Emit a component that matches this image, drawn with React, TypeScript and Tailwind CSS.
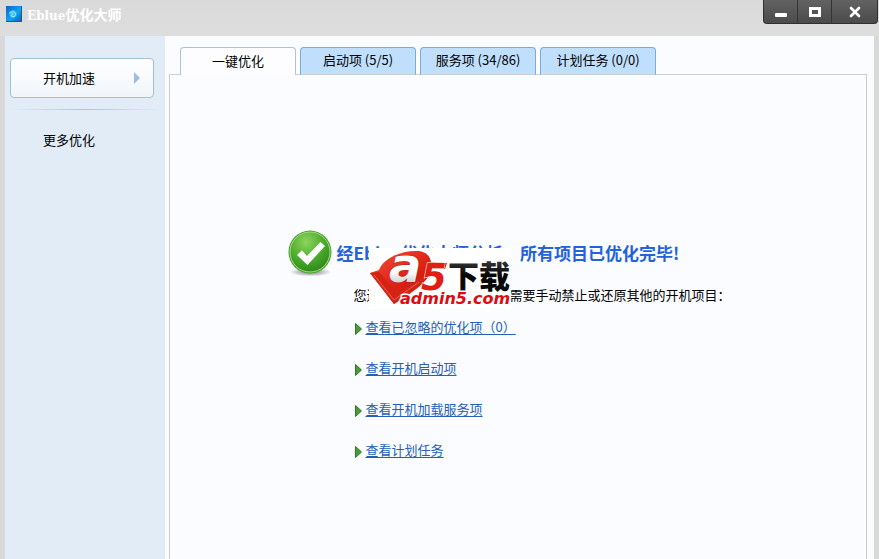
import { useState } from 'react';

const tabs = ['一键优化', '启动项 (5/5)', '服务项 (34/86)', '计划任务 (0/0)'];

const links = [
  '查看已忽略的优化项（0）',
  '查看开机启动项',
  '查看开机加载服务项',
  '查看计划任务',
];

export default function App() {
  const [tab, setTab] = useState(0);

  return (
    <div className="flex min-h-screen flex-col bg-[#dad9da] font-['Noto_Sans_CJK_SC','Liberation_Sans',sans-serif] text-[13px] leading-5 text-black">
      <TitleBar />
      <div className="flex flex-1 px-[5px]">
        <Sidebar />
        <main className="flex min-w-0 flex-1 flex-col bg-[#fbfcff] pt-[11px] pr-[7px] pl-1">
          <div role="tablist" className="relative z-10 -mb-px flex gap-1 pl-[11px]">
            {tabs.map((name, i) => (
              <button
                key={name}
                role="tab"
                aria-selected={i === tab}
                onClick={() => setTab(i)}
                className={
                  i === tab
                    ? 'h-7 w-[116px] rounded-t border border-b-0 border-[#a9c4d6] bg-[#fdfdff] pb-0.5'
                    : 'h-7 w-[116px] rounded-t border border-[#7fabd2] border-b-[#c9ced2] bg-[#c0dffd] pb-0.5'
                }
              >
                {name}
              </button>
            ))}
          </div>
          <section className="flex-1 border border-b-0 border-[#ccced0] pt-[155px]">
            <Result />
          </section>
        </main>
      </div>
    </div>
  );
}

function TitleBar() {
  return (
    <header className="flex h-9 items-start justify-between bg-linear-to-b from-[#d9d9d9] to-[#dedede]">
      <h1 className="flex items-center gap-[5px] pt-1 pl-[6px] text-sm font-bold text-white">
        <svg width="16" height="16" viewBox="0 0 16 16">
          <defs>
            <linearGradient id="app" x1="0" y1="0" x2="1" y2="1">
              <stop offset="0" stopColor="#0d62c4" />
              <stop offset=".55" stopColor="#12a4f4" />
              <stop offset="1" stopColor="#0755b8" />
            </linearGradient>
          </defs>
          <rect width="16" height="16" fill="url(#app)" />
          <path d="M0 15.5h15.5V0" fill="none" stroke="#31587c" />
          <circle cx="7" cy="8" r="3.5" fill="#35c3ff" />
          <path d="M3 7l4-2 3 3-2 3-3-1 2-3" fill="none" stroke="#b8f0ff" strokeWidth=".8" />
        </svg>
        <span>
          <span className="font-['DejaVu_Serif',serif] text-xs">Eblue</span>
          优化大师
        </span>
      </h1>
      <div className="mr-px flex h-6 overflow-hidden rounded-b border border-t-0 border-[#303030] bg-linear-to-b from-[#626262] to-[#4b4b4b]">
        <button aria-label="最小化" className="flex w-[34px] items-center justify-center border-r border-[#343434]">
          <svg width="14" height="14" viewBox="0 0 14 14">
            <rect x="1" y="8" width="12" height="4" rx="1" fill="#fff" />
          </svg>
        </button>
        <button aria-label="最大化" className="flex w-[34px] items-center justify-center border-r border-[#343434]">
          <svg width="14" height="14" viewBox="0 0 14 14">
            <rect x="2.5" y="3.5" width="9" height="7" fill="none" stroke="#fff" strokeWidth="3" />
          </svg>
        </button>
        <button aria-label="关闭" className="flex w-[45px] items-center justify-center">
          <svg width="14" height="14" viewBox="0 0 14 14">
            <path d="M3 3l8 8M11 3l-8 8" stroke="#fff" strokeWidth="2.6" strokeLinecap="round" />
          </svg>
        </button>
      </div>
    </header>
  );
}

function Sidebar() {
  return (
    <nav className="w-40 shrink-0 bg-[#e1ecf7] px-[5px] pt-[22px]">
      <button className="relative flex h-10 w-36 items-center rounded border border-[#9fc2d0] bg-linear-to-b from-white to-[#f1f5fa] pl-8">
        开机加速
        <svg className="absolute right-3" width="8" height="12" viewBox="0 0 8 12">
          <path d="M1 0l6 6-6 6z" fill="#9dbde2" />
        </svg>
      </button>
      <div className="mt-[11px] h-px bg-linear-to-r from-transparent via-[#8fccf8] to-transparent" />
      <button className="mt-[10px] flex h-10 w-36 items-center pl-[33px]">更多优化</button>
    </nav>
  );
}

function Result() {
  return (
    <div className="relative mx-auto w-[461px]">
      <div className="flex h-[46px] items-center gap-1">
        <svg className="shrink-0" width="45" height="48" viewBox="0 0 45 48">
          <defs>
            <radialGradient id="ok" cx=".4" cy=".25" r=".8">
              <stop offset="0" stopColor="#8cd45c" />
              <stop offset=".55" stopColor="#4dab2c" />
              <stop offset="1" stopColor="#2b8519" />
            </radialGradient>
            <radialGradient id="shade">
              <stop offset="0" stopColor="#777" />
              <stop offset="1" stopColor="#777" stopOpacity="0" />
            </radialGradient>
          </defs>
          <ellipse cx="22.5" cy="43" rx="21" ry="4.5" fill="url(#shade)" />
          <circle cx="22" cy="23" r="21.5" fill="#4aa12e" />
          <circle cx="22" cy="23" r="20" fill="url(#ok)" stroke="#a5dc82" />
          <path d="M9 26l5-4.5 5 5.5L32.500 13l4.500 4L19.500 36z" fill="#fff" />
        </svg>
        <h2 className="text-[17px] font-bold whitespace-nowrap text-[#2362d8]">
          经Eblue优化大师分析，所有项目已优化完毕!
        </h2>
      </div>
      <p className="mt-[9px] pl-[66px] whitespace-nowrap">
        您还可以通过以下功能根据需要手动禁止或还原其他的开机项目：
      </p>
      <ul className="mt-3 flex flex-col gap-[21px] pl-[67px]">
        {links.map((text) => (
          <li key={text} className="flex items-center gap-1">
            <svg className="mt-1" width="7" height="12" viewBox="0 0 7 12">
              <path d="M.5.5L6.500 6 .5 11.500z" fill="#4d9a3c" stroke="#2c7a24" />
            </svg>
            <a href="#" className="text-[#2460b4] underline underline-offset-2">
              {text}
            </a>
          </li>
        ))}
      </ul>
      <Logo />
    </div>
  );
}

function Logo() {
  return (
    <svg
      className="absolute top-[18px] left-[81px] overflow-visible bg-white"
      width="142"
      height="61"
      viewBox="0 0 142 61"
    >
      <defs>
        <linearGradient id="red" x1="0" y1="0" x2="1" y2="1">
          <stop offset="0" stopColor="#f0503a" />
          <stop offset=".5" stopColor="#e01f12" />
          <stop offset="1" stopColor="#a80d08" />
        </linearGradient>
        <linearGradient id="silver" x1="0" y1="0" x2="0" y2="1">
          <stop offset=".62" stopColor="#fff" />
          <stop offset=".85" stopColor="#c8c8c8" />
        </linearGradient>
        <linearGradient id="ink" x1="0" y1="0" x2="0" y2="1">
          <stop offset="0" stopColor="#555" />
          <stop offset=".5" stopColor="#080808" />
        </linearGradient>
      </defs>
      <path
        d="M1 25L10 22C14 11 30 3 47 3c10 0 14 5 15 11l16 1-2 6H62c-1 9-16 20-37 35z"
        fill="url(#red)"
      />
      <path d="M1 25l9-1 15 17 36-16c-3 9-15 18-36 31z" fill="#d32216" />
      <path d="M5 27l20 25 25-18" fill="none" stroke="#f2604a" strokeWidth="1" />
      <text
        x="20"
        y="34"
        fontFamily="DejaVu Sans"
        fontSize="48"
        fontWeight="bold"
        fontStyle="italic"
        fill="url(#silver)"
        stroke="#a0261c"
        strokeWidth="1"
        paintOrder="stroke"
      >
        a
      </text>
      <text
        x="52"
        y="42"
        fontFamily="DejaVu Sans"
        fontSize="37"
        fontWeight="bold"
        fontStyle="italic"
        fill="#de2014"
        stroke="#fff"
        strokeWidth="1"
        paintOrder="stroke"
      >
        5
      </text>
      <text x="79" y="40" fontFamily="Noto Sans CJK SC" fontSize="31" fontWeight="900" fill="url(#ink)">
        下载
      </text>
      <text
        x="31"
        y="56"
        fontFamily="DejaVu Sans"
        fontSize="16"
        fontWeight="bold"
        fontStyle="italic"
        fill="#dc0c12"
        stroke="#fff"
        strokeWidth="3"
        paintOrder="stroke"
      >
        admin5.com
      </text>
    </svg>
  );
}
